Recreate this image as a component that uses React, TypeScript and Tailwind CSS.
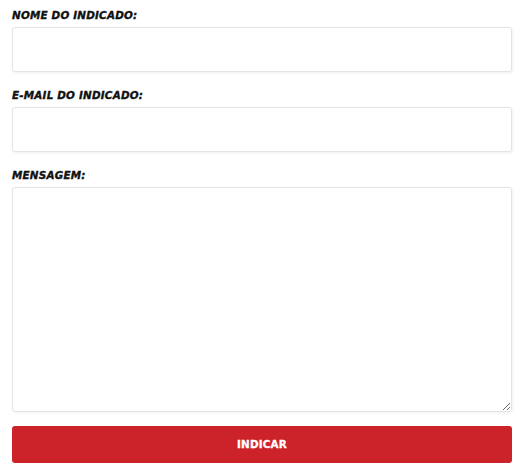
export default function App() {
  const labelCls =
    "block text-[10.4px] leading-[15px] font-bold italic text-[#111] uppercase mb-[4px] tracking-[0.2px] [-webkit-text-stroke:0.35px_#111] [font-family:'DejaVu_Sans',sans-serif]";
  const fieldCls =
    "block w-full bg-white border border-[#e4e4e4] rounded-[3px] shadow-[1px_1px_3px_rgba(0,0,0,0.06)] px-3 text-sm outline-none";

  return (
    <div className="w-[528px] h-[470px] bg-white pt-[8px] px-[12px] [font-family:'DejaVu_Sans',sans-serif]">
      <form className="w-[500px]" onSubmit={(e) => e.preventDefault()}>
        <label className={labelCls}>Nome do indicado:</label>
        <input type="text" className={`${fieldCls} h-[45px]`} />

        <label className={`${labelCls} mt-[16px]`}>E-mail do indicado:</label>
        <input type="email" className={`${fieldCls} h-[45px]`} />

        <label className={`${labelCls} mt-[16px]`}>Mensagem:</label>
        <textarea className={`${fieldCls} h-[225px] py-2`} />

        <button
          type="submit"
          className="mt-[14px] w-full h-[37px] bg-[#cc2229] rounded-[3px] text-white text-[10.4px] font-bold uppercase tracking-[0.2px] [-webkit-text-stroke:0.3px_#fff]"
        >
          Indicar
        </button>
      </form>
    </div>
  );
}
